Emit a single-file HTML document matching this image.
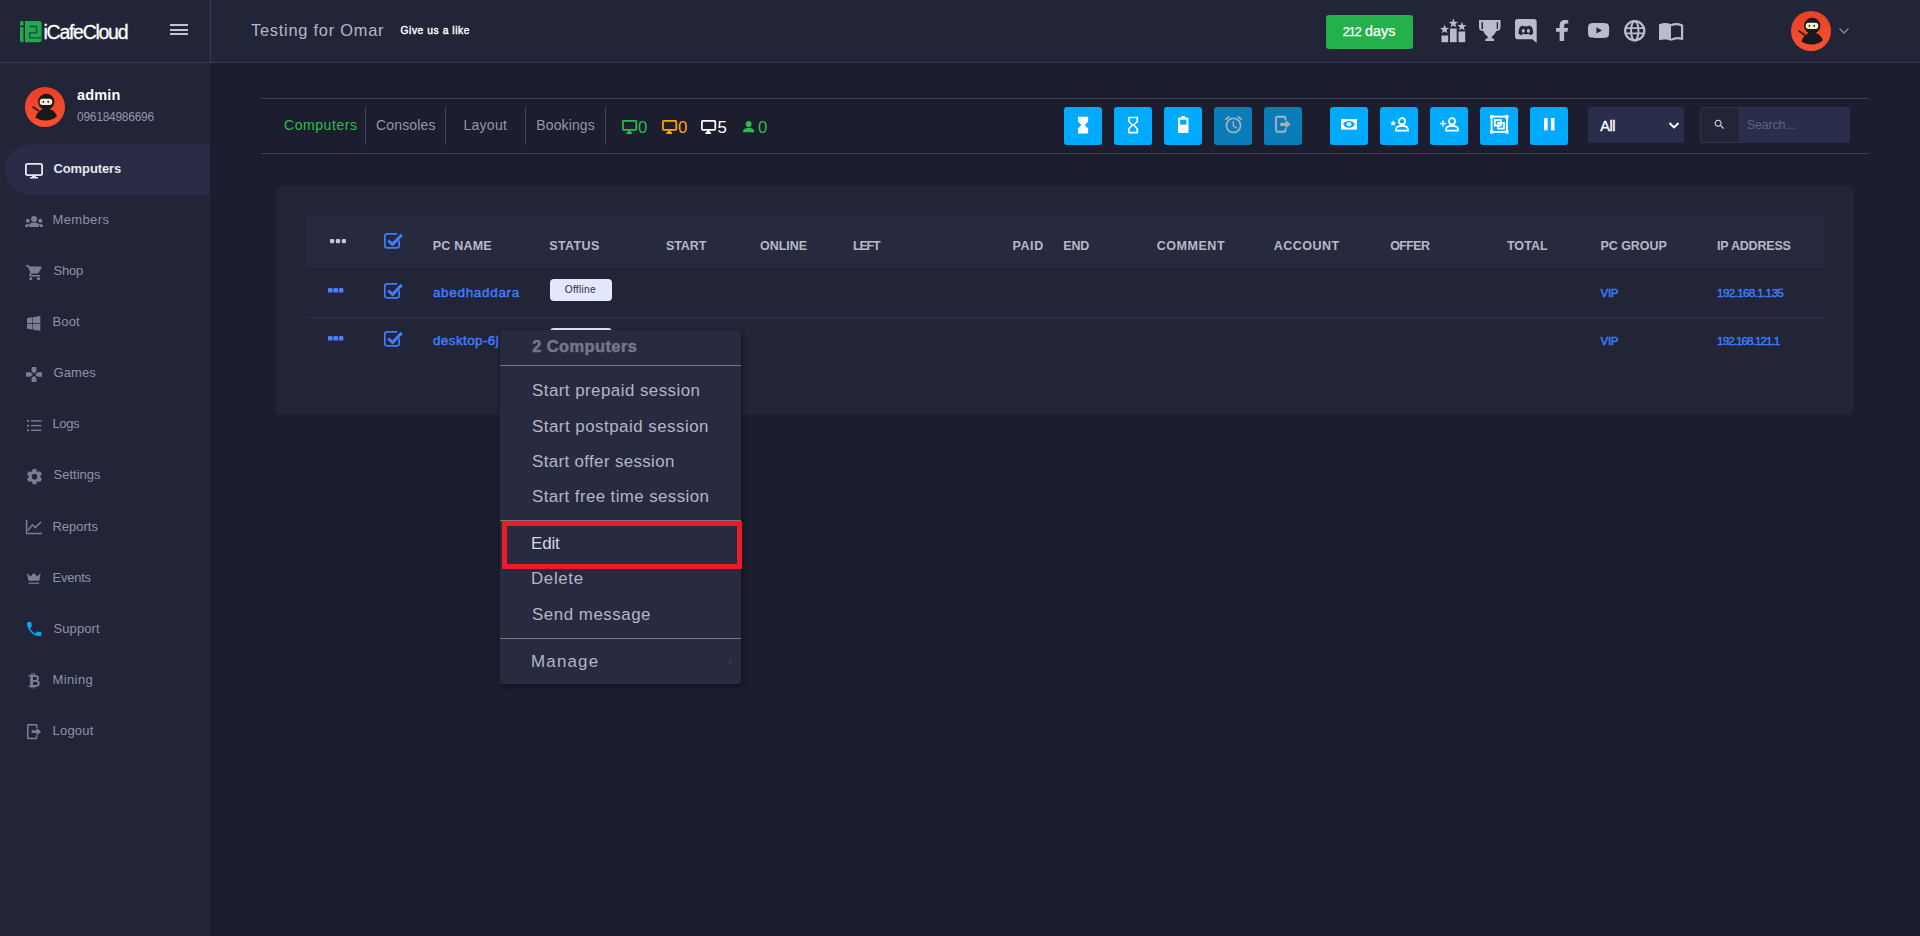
<!DOCTYPE html>
<html lang="en">
<head>
<meta charset="utf-8">
<title>iCafeCloud - Computers</title>
<style>
*{box-sizing:border-box;margin:0;padding:0}
html,body{width:1920px;height:936px;overflow:hidden}
body{background:#1c1d2e;font-family:"Liberation Sans",sans-serif;position:relative;color:#fff}
.abs{position:absolute}
.t{position:absolute;white-space:nowrap;line-height:1;display:block}
svg{position:absolute;display:block;overflow:visible}
#header{left:0;top:0;width:1920px;height:63px;background:#222437;border-bottom:1px solid #363960}
#side{left:0;top:63px;width:210px;height:873px;background:#222437}
#hsep{left:210px;top:0;width:1px;height:62px;background:#363960}
#navact{left:5px;top:144px;width:205px;height:51px;background:#292b47;border-radius:26px 0 0 26px}
.av{border-radius:50%;background:linear-gradient(180deg,#e8402a 0%,#f9512d 100%);overflow:hidden}
#daysbtn{left:1326px;top:15px;width:87px;height:34px;background:#24b04b;border-radius:3px}
#tabbar{left:261px;top:98px;width:1608px;height:56px;border-top:1px solid #414256;border-bottom:1px solid #414256}
.vsep{width:1px;top:107px;height:38px;background:#43455f}
.btn{top:107px;width:38px;height:38px;border-radius:3px;background:#00aaff}
.btn.dis{background:#0a7cb9}
#sel{left:1588px;top:107px;width:96px;height:36px;background:#2b2d4c;border-radius:3px}
#sgrp{left:1700px;top:107px;width:150px;height:36px;border-radius:3px;background:#2b2d4c;overflow:hidden}
#sico{left:0;top:0;width:40px;height:36px;background:#222437;border:1px solid #2e3150;border-radius:3px 0 0 3px}
#card{left:276px;top:186px;width:1578px;height:229px;background:#222437;border-radius:5px}
#thead{left:306px;top:216px;width:1518px;height:52px;background:#27293e}
#rowsep{left:306px;top:317px;width:1518px;height:1px;background:#2f3252}
.badge{left:550px;width:62px;height:22px;background:#e5e7fd;border-radius:4px}
#menu{left:500px;top:330px;width:241px;height:354px;background:#282a3f;border-radius:3px;box-shadow:1px 2px 5px rgba(0,0,0,.45)}
.msep{left:500px;width:241px;height:1px;background:#77767a}
#red{left:502px;top:521px;width:240px;height:48px;border:5px solid #ec1c27}
</style>
</head>
<body>
<div id="header" class="abs"></div>
<div id="side" class="abs"></div>
<div id="hsep" class="abs"></div>
<div id="navact" class="abs"></div>

<!-- logo -->
<svg style="left:20px;top:21.25px" width="21.6" height="21.25" viewBox="0 0 21.6 21.25">
 <rect x="0" y="0" width="3.55" height="4.65" rx="1.2" fill="#23a650"/>
 <path d="M0 5.9H3.55V21.25H1.6C0.7 21.25 0 20.5 0 19.6Z" fill="#23a650"/>
 <path d="M5 0H19.4C20.6 0 21.6 1 21.6 2.2V19C21.6 20.2 20.6 21.25 19.4 21.25H5Z" fill="#23a650"/>
 <path d="M9.6 5.5H16.6V11.9H9.6V16.9H21.6" stroke="#1d4a3a" stroke-width="1.4" fill="none" stroke-linejoin="round"/>
</svg>
<!-- hamburger -->
<div class="abs" style="left:170px;top:24px;width:18px;height:2px;background:#c2c3cb"></div>
<div class="abs" style="left:170px;top:29px;width:18px;height:2px;background:#c2c3cb"></div>
<div class="abs" style="left:170px;top:33px;width:18px;height:2px;background:#c2c3cb"></div>

<div id="daysbtn" class="abs"></div>

<svg style="left:0px;top:0px" width="1920" height="63" viewBox="0 0 1920 63" ><g fill="#b9bccd"><rect x="1441.5" y="35.5" width="6.7" height="6.7"/><rect x="1450" y="28.5" width="6.7" height="13.7"/><rect x="1458.5" y="31.5" width="6.7" height="10.7"/><polygon points="1444.60,24.60 1445.78,27.77 1449.17,27.92 1446.52,30.02 1447.42,33.28 1444.60,31.42 1441.78,33.28 1442.68,30.02 1440.03,27.92 1443.42,27.77"/><polygon points="1453.40,18.50 1454.61,21.74 1458.06,21.89 1455.36,24.04 1456.28,27.36 1453.40,25.46 1450.52,27.36 1451.44,24.04 1448.74,21.89 1452.19,21.74"/><polygon points="1461.90,21.80 1463.08,24.97 1466.47,25.12 1463.82,27.22 1464.72,30.48 1461.90,28.62 1459.08,30.48 1459.98,27.22 1457.33,25.12 1460.72,24.97"/></g></svg>
<svg style="left:1478.75px;top:20px" width="21.56" height="21.06" viewBox="0 0 21.56 21.06" ><g fill="#b9bccd"><path fill-rule="evenodd" d="M0 0H21.56V7.2C21.56 9.5 20 10.9 17.6 10.9H3.96C1.56 10.9 0 9.5 0 7.2ZM2.5 2.3V8.9H4.1V2.3ZM17.46 2.3V8.9H19.06V2.3Z"/><path d="M4.06 0H17.5V8.5C17.5 12.8 14.4 15.5 12.8 16.5V18.4H8.75V16.5C7.2 15.5 4.06 12.8 4.06 8.5Z"/><path d="M6.25 21.06V20.4C6.25 19.2 7.2 18.3 8.4 18.3H13.2C14.4 18.3 15.3 19.2 15.3 20.4V21.06Z"/></g></svg>
<svg style="left:1515px;top:19px" width="21.7" height="24" viewBox="0 0 21.7 24" ><path fill="#b9bccd" d="M2.6 0H19.1C20.5 0 21.7 1.2 21.7 2.6V24L17.2 20.3H2.6C1.2 20.3 0 19.1 0 17.7V2.6C0 1.2 1.2 0 2.6 0Z"/><g transform="translate(0,-0.25) scale(1,1.1)"><path fill="#222437" d="M8.1 6.2C6.9 6.4 5.9 6.8 5.1 7.3C3.9 9.3 3.5 11.4 3.6 13.6C4.6 14.4 5.7 14.9 6.9 15.1L7.6 13.9C7.1 13.7 6.7 13.5 6.3 13.2C8.9 14.5 12.8 14.5 15.4 13.2C15 13.5 14.6 13.7 14.1 13.9L14.8 15.1C16 14.9 17.1 14.4 18.1 13.6C18.3 11.1 17.7 9.1 16.6 7.3C15.8 6.8 14.8 6.4 13.6 6.2L13.2 7C11.6 6.8 10.1 6.8 8.5 7Z"/><ellipse cx="8.3" cy="11" rx="1.5" ry="1.7" fill="#b9bccd"/><ellipse cx="13.4" cy="11" rx="1.5" ry="1.7" fill="#b9bccd"/></g></svg>
<svg style="left:1554.9px;top:19.9px" width="14.3" height="21.1" viewBox="0 0 320 512" preserveAspectRatio="none"><path fill="#b9bccd" d="M279.14 288l14.22-92.66h-88.91v-60.13c0-25.35 12.42-50.06 52.24-50.06h40.42V6.26S260.43 0 225.36 0c-73.22 0-121.08 44.38-121.08 124.72v70.62H22.89V288h81.39v224h100.17V288z"/></svg>
<svg style="left:1587.7px;top:23.3px" width="21.2" height="14.9" viewBox="15 64 546 384" preserveAspectRatio="none"><path fill="#b9bccd" d="M549.655 124.083c-6.281-23.65-24.787-42.276-48.284-48.597C458.781 64 288 64 288 64S117.22 64 74.629 75.486c-23.497 6.322-42.003 24.947-48.284 48.597-11.412 42.867-11.412 132.305-11.412 132.305s0 89.438 11.412 132.305c6.281 23.65 24.787 41.5 48.284 47.821C117.22 448 288 448 288 448s170.78 0 213.371-11.486c23.497-6.321 42.003-24.171 48.284-47.821 11.412-42.867 11.412-132.305 11.412-132.305s0-89.438-11.412-132.305zm-317.51 213.508V175.185l142.739 81.205-142.739 81.201z"/></svg>
<svg style="left:1623.9px;top:19.8px" width="21.5" height="21.5" viewBox="0 0 21.5 21.5" ><g fill="none" stroke="#b9bccd"><circle cx="10.75" cy="10.75" r="9.6" stroke-width="2.3"/><ellipse cx="10.75" cy="10.75" rx="3.7" ry="9.6" stroke-width="2"/><path stroke-width="1.9" d="M2 8.1H19.5M2 13.4H19.5"/></g></svg>
<svg style="left:1658.7px;top:22.7px" width="24.2" height="18.2" viewBox="0 0 24.2 18.2" ><path fill="#b9bccd" d="M0 1.6C3.6 -0.3 8.2 -0.4 12 1.3V18C8.4 16.2 3.7 16.2 0 17.2Z"/><path fill="none" stroke="#b9bccd" stroke-width="2.2" d="M12.1 2.2C15.4 0.7 19.6 0.8 23.1 2.4V15.8C19.7 14.9 15.5 15 12.1 16.9"/></svg>
<svg style="left:1838px;top:26.9px" width="12" height="8" viewBox="0 0 12 8" ><path d="M1.5 1.5L6 6L10.5 1.5" fill="none" stroke="#7f829b" stroke-width="1.5"/></svg>

<!-- avatars -->
<div class="abs av" style="left:25px;top:87px;width:40px;height:40px"></div><svg style="left:25px;top:87px" width="40" height="40" viewBox="0 0 40 40" ><g><path d="M8.1 19.1L14.4 23.5L13.5 24.8L7.2 20.4Z" fill="#191919"/><circle cx="21.2" cy="14.8" r="8.1" fill="#191919"/><path d="M10.4 30.4C12.2 25.2 16 21.6 21 21.6C26 21.6 30.2 24.6 32 29.2C28.6 32.2 24.6 33.4 20.8 33.4C16.8 33.4 13.2 32.4 10.4 30.4Z" fill="#191919"/><rect x="14.7" y="11.7" width="12.6" height="6.4" rx="3" fill="#fdf0d9"/><ellipse cx="18.4" cy="14.8" rx=".85" ry="1.15" fill="#191919"/><ellipse cx="23.2" cy="14.8" rx=".85" ry="1.15" fill="#191919"/></g></svg>
<div class="abs av" style="left:1791px;top:11px;width:40px;height:40px"></div><svg style="left:1791px;top:11px" width="40" height="40" viewBox="0 0 40 40" ><g><path d="M8.1 19.1L14.4 23.5L13.5 24.8L7.2 20.4Z" fill="#191919"/><circle cx="21.2" cy="14.8" r="8.1" fill="#191919"/><path d="M10.4 30.4C12.2 25.2 16 21.6 21 21.6C26 21.6 30.2 24.6 32 29.2C28.6 32.2 24.6 33.4 20.8 33.4C16.8 33.4 13.2 32.4 10.4 30.4Z" fill="#191919"/><rect x="14.7" y="11.7" width="12.6" height="6.4" rx="3" fill="#fdf0d9"/><ellipse cx="18.4" cy="14.8" rx=".85" ry="1.15" fill="#191919"/><ellipse cx="23.2" cy="14.8" rx=".85" ry="1.15" fill="#191919"/></g></svg>

<!-- nav icons -->
<svg style="left:25px;top:162.5px" width="18" height="15.5" viewBox="0 0 18 15.5" ><rect x="0.9" y="0.9" width="16.2" height="11.2" rx="1.6" fill="none" stroke="#e6e7f0" stroke-width="1.8"/><path d="M7.3 12.5H10.7L11 14H13V15.5H5V14H7Z" fill="#e6e7f0"/></svg>
<svg style="left:25px;top:216px" width="18.1" height="11" viewBox="0 0 18.1 11" ><g fill="#7a7e9b"><circle cx="9.05" cy="3" r="3"/><path d="M4.1 11V9.5C4.1 7.4 6.7 6.6 9.05 6.6C11.4 6.6 14 7.4 14 9.5V11Z"/><circle cx="2.8" cy="4.7" r="2.05"/><circle cx="15.3" cy="4.7" r="2.05"/><path d="M0 11V10C0 8.6 1.4 7.9 2.8 7.9C3.5 7.9 4.1 8 4.6 8.3C3.6 8.9 3.1 9.6 3.1 10.5V11Z"/><path d="M18.1 11V10C18.1 8.6 16.7 7.9 15.3 7.9C14.6 7.9 14 8 13.5 8.3C14.5 8.9 15 9.6 15 10.5V11Z"/></g></svg>
<svg style="left:25.6px;top:264.75px" width="15.65" height="15.25" viewBox="1 2 20 20" preserveAspectRatio="none"><path fill="#7a7e9b" d="M7 18c-1.1 0-1.99.9-1.99 2S5.9 22 7 22s2-.9 2-2-.9-2-2-2zM1 2v2h2l3.6 7.59-1.35 2.45c-.16.28-.25.61-.25.96 0 1.1.9 2 2 2h12v-2H7.42c-.14 0-.25-.11-.25-.25l.03-.12.9-1.63h7.45c.75 0 1.41-.41 1.75-1.03l3.58-6.49c.08-.14.12-.31.12-.48 0-.55-.45-1-1-1H5.21l-.94-2H1zm16 16c-1.1 0-1.99.9-1.99 2s.89 2 1.99 2 2-.9 2-2-.9-2-2-2z"/></svg>
<svg style="left:26.9px;top:316.25px" width="13.35" height="14.75" viewBox="0 32 448 448" preserveAspectRatio="none"><path fill="#7a7e9b" d="M0 93.7l183.6-25.3v177.4H0V93.7zm0 324.6l183.6 25.3V268.4H0v149.9zm203.8 28L448 480V268.4H203.8v177.9zm0-380.6v180.1H448V32L203.8 65.7z"/></svg>
<svg style="left:26px;top:366.9px" width="16" height="15" viewBox="2 2 20 20" preserveAspectRatio="none"><path fill="#7a7e9b" d="M15 7.5V2H9v5.5l3 3 3-3zM7.5 9H2v6h5.5l3-3-3-3zM9 16.5V22h6v-5.5l-3-3-3 3zM16.5 9l-3 3 3 3H22V9h-5.5z"/></svg>
<svg style="left:26.9px;top:419.75px" width="14.4" height="11.25" viewBox="0 0 14.4 11.25" ><g fill="#7a7e9b"><rect x="0" y="0" width="2" height="1.8"/><rect x="0" y="4.7" width="2" height="1.8"/><rect x="0" y="9.4" width="2" height="1.8"/><rect x="4" y="0.2" width="10.4" height="1.4"/><rect x="4" y="4.9" width="10.4" height="1.4"/><rect x="4" y="9.6" width="10.4" height="1.4"/></g></svg>
<svg style="left:26.5px;top:468.75px" width="15" height="15.25" viewBox="2.6 2.4 18.8 19.2" preserveAspectRatio="none"><path fill="#7a7e9b" d="M19.14 12.94c.04-.3.06-.61.06-.94 0-.32-.02-.64-.07-.94l2.03-1.58c.18-.14.23-.41.12-.61l-1.92-3.32c-.12-.22-.37-.29-.59-.22l-2.39.96c-.5-.38-1.03-.7-1.62-.94l-.36-2.54c-.04-.24-.24-.41-.48-.41h-3.84c-.24 0-.43.17-.47.41l-.36 2.54c-.59.24-1.13.57-1.62.94l-2.39-.96c-.22-.08-.47 0-.59.22L2.74 8.87c-.12.21-.08.47.12.61l2.03 1.58c-.05.3-.09.63-.09.94s.02.64.07.94l-2.03 1.58c-.18.14-.23.41-.12.61l1.92 3.32c.12.22.37.29.59.22l2.39-.96c.5.38 1.03.7 1.62.94l.36 2.54c.05.24.24.41.48.41h3.84c.24 0 .44-.17.47-.41l.36-2.54c.59-.24 1.13-.56 1.62-.94l2.39.96c.22.08.47 0 .59-.22l1.92-3.32c.12-.22.07-.47-.12-.61l-2.01-1.58zM12 15.6c-1.98 0-3.6-1.62-3.6-3.6s1.62-3.6 3.6-3.6 3.6 1.62 3.6 3.6-1.62 3.6-3.6 3.6z"/></svg>
<svg style="left:26px;top:520px" width="16" height="14" viewBox="0 0 16 14" ><path d="M0.6 0V13.4H16" fill="none" stroke="#7a7e9b" stroke-width="1.5"/><path d="M1.8 10.6L6.4 4.8L9.2 7.6L15 2" fill="none" stroke="#7a7e9b" stroke-width="1.5"/></svg>
<svg style="left:27.25px;top:573px" width="13.75" height="11" viewBox="0 0 13.75 11" ><path fill="#7a7e9b" d="M0 0L3.6 3.6L6.9 0L10.2 3.6L13.75 0L12.3 7.8H1.5Z"/><rect x="1.5" y="9.6" width="10.8" height="1.2" fill="#7a7e9b"/></svg>
<svg style="left:26.9px;top:621.9px" width="14.35" height="14.35" viewBox="3 3 18 18" ><path fill="#00a6ff" d="M6.62 10.79c1.44 2.83 3.76 5.14 6.59 6.59l2.2-2.2c.27-.27.67-.36 1.02-.24 1.12.37 2.33.57 3.57.57.55 0 1 .45 1 1V20c0 .55-.45 1-1 1-9.39 0-17-7.61-17-17 0-.55.45-1 1-1h3.5c.55 0 1 .45 1 1 0 1.25.2 2.45.57 3.57.11.35.03.74-.25 1.02l-2.2 2.2z"/></svg>
<svg style="left:28px;top:672.5px" width="11.75" height="15.5" viewBox="0 0 11.75 15.5" ><g fill="none" stroke="#7a7e9b"><path stroke-width="1.9" d="M3 2.9H6.7C8.8 2.9 10 3.9 10 5.4C10 6.9 8.8 7.9 6.9 7.9H4M4 7.9H7.4C9.5 7.9 10.8 8.9 10.8 10.5C10.8 12.1 9.5 13 7.4 13H3"/><path stroke-width="2.9" d="M3.6 2V13.9"/><path stroke-width="1.3" d="M0.4 2.6H3M0.4 13.3H3"/><path stroke-width="1.2" d="M3.9 0V2.4M6.3 0V2.4M3.9 13.4V15.5M6.3 13.4V15.5"/></g></svg>
<svg style="left:26.9px;top:723.75px" width="14.1" height="15.25" viewBox="0 0 14.1 15.25" ><path fill="none" stroke="#7a7e9b" stroke-width="1.5" d="M9.6 4V1.4C9.6 1 9.3 0.75 9 0.75H1.4C1 0.75 0.75 1 0.75 1.4V13.9C0.75 14.2 1 14.5 1.4 14.5H9C9.3 14.5 9.6 14.2 9.6 13.9V11.2"/><path fill="#7a7e9b" d="M4.6 6.2H9.6V3.9L14.1 7.65L9.6 11.4V9.1H4.6Z"/></svg>

<!-- tab bar -->
<div id="tabbar" class="abs"></div>
<div class="abs vsep" style="left:365px"></div>
<div class="abs vsep" style="left:445px"></div>
<div class="abs vsep" style="left:525px"></div>
<div class="abs vsep" style="left:605px"></div>
<svg style="left:622px;top:120px" width="15.2" height="13.9" viewBox="0 0 15.2 13.9" ><rect x="0.9" y="0.9" width="13.4" height="9" rx="0.8" fill="none" stroke="#2bbd4f" stroke-width="1.75"/><path d="M6 10.6H8.6L8.9 12.3H10.1V13.9H4.4V12.3H5.7Z" fill="#2bbd4f"/></svg>
<svg style="left:661.9px;top:120px" width="15.2" height="13.9" viewBox="0 0 15.2 13.9" ><rect x="0.9" y="0.9" width="13.4" height="9" rx="0.8" fill="none" stroke="#ffa800" stroke-width="1.75"/><path d="M6 10.6H8.6L8.9 12.3H10.1V13.9H4.4V12.3H5.7Z" fill="#ffa800"/></svg>
<svg style="left:701.3px;top:120px" width="15.2" height="13.9" viewBox="0 0 15.2 13.9" ><rect x="0.9" y="0.9" width="13.4" height="9" rx="0.8" fill="none" stroke="#ffffff" stroke-width="1.75"/><path d="M6 10.6H8.6L8.9 12.3H10.1V13.9H4.4V12.3H5.7Z" fill="#ffffff"/></svg>
<svg style="left:743px;top:121.4px" width="11.3" height="11.3" viewBox="0 0 11.2 11.5" ><circle cx="5.6" cy="3" r="3" fill="#2bbd4f"/><path d="M0 11.5V10C0 7.8 3.6 6.8 5.6 6.8C7.6 6.8 11.2 7.8 11.2 10V11.5Z" fill="#2bbd4f"/></svg>
<div class="abs btn" style="left:1064px"></div>
<div class="abs btn" style="left:1114px"></div>
<div class="abs btn" style="left:1164px"></div>
<div class="abs btn dis" style="left:1214px"></div>
<div class="abs btn dis" style="left:1264px"></div>
<div class="abs btn" style="left:1330px"></div>
<div class="abs btn" style="left:1380px"></div>
<div class="abs btn" style="left:1430px"></div>
<div class="abs btn" style="left:1480px"></div>
<div class="abs btn" style="left:1530px"></div>
<svg style="left:1073.1px;top:114.5px" width="20.2" height="20.2" viewBox="0 0 24 24" ><path fill="#ffffff" d="M6 2v6h.01L6 8.01 10 12l-4 4 .01.01H6V22h12v-5.99h-.01L18 16l-4-4 4-3.99-.01-.01H18V2H6z"/></svg>
<svg style="left:1123.1px;top:114.5px" width="20.2" height="20.2" viewBox="0 0 24 24" ><path fill="#ffffff" d="M6 2v6h.01L6 8.01 10 12l-4 4 .01.01H6V22h12v-5.99h-.01L18 16l-4-4 4-3.99-.01-.01H18V2H6zm10 14.5V20H8v-3.5l4-4 4 4zm-4-5l-4-4V4h8v3.5l-4 4z"/></svg>
<svg style="left:1177.9px;top:116.2px" width="10.5" height="17.1" viewBox="0 0 10 17" preserveAspectRatio="none"><path fill="#fff" d="M3.3 0H6.7V1.6H8.6C9.4 1.6 10 2.2 10 3V15.6C10 16.4 9.4 17 8.6 17H1.4C0.6 17 0 16.4 0 15.6V3C0 2.2 0.6 1.6 1.4 1.6H3.3Z"/><rect x="2" y="3.6" width="6" height="5" fill="#00aaff"/></svg>
<svg style="left:1222.7px;top:114.1px" width="21" height="21" viewBox="0 0 24 24" ><path fill="#aab0b8" d="M22 5.72l-4.6-3.86-1.29 1.53 4.6 3.86L22 5.72zM7.88 3.39L6.6 1.86 2 5.71l1.29 1.53 4.59-3.85zM12.5 8H11v6l4.75 2.85.75-1.23-4-2.37V8zM12 4c-4.97 0-9 4.03-9 9s4.02 9 9 9c4.97 0 9-4.03 9-9s-4.03-9-9-9zm0 16c-3.87 0-7-3.13-7-7s3.13-7 7-7 7 3.13 7 7-3.13 7-7 7z"/></svg>
<svg style="left:1275px;top:116.4px" width="15.9" height="16.6" viewBox="0 0 15.4 16.6" ><path fill="none" stroke="#aab0b8" stroke-width="1.9" d="M10.2 4.2V2.1C10.2 1.4 9.7 0.8 9 0.8H2.1C1.4 0.8 0.8 1.4 0.8 2.1V14.5C0.8 15.2 1.4 15.8 2.1 15.8H9C9.7 15.8 10.2 15.2 10.2 14.5V12.3"/><path fill="#aab0b8" d="M5 6.7H10.4V4.2L15.4 8.3L10.4 12.4V9.9H5Z"/></svg>
<svg style="left:1341px;top:119.3px" width="16" height="10.6" viewBox="0 0 16 10.6" ><rect x="0" y="0" width="16" height="10.6" fill="#fff"/><ellipse cx="8" cy="5.3" rx="5.6" ry="3.4" fill="#00aaff"/><ellipse cx="8" cy="5.3" rx="2.4" ry="2" fill="#fff"/></svg>
<svg style="left:1389.5px;top:117.1px" width="19" height="14.5" viewBox="0 0 19 14.5" ><polygon fill="#fff" points="3.10,3.10 3.91,5.28 6.24,5.38 4.42,6.83 5.04,9.07 3.10,7.79 1.16,9.07 1.78,6.83 -0.04,5.38 2.29,5.28"/><circle cx="12" cy="4.2" r="3.1" fill="none" stroke="#fff" stroke-width="1.7"/><path d="M6 13.6V12.4C6 10 9 8.9 12 8.9C15 8.9 18 10 18 12.4V13.6Z" fill="none" stroke="#fff" stroke-width="1.7"/></svg>
<svg style="left:1439.5px;top:117.1px" width="19" height="14.5" viewBox="0 0 19 14.5" ><path d="M0 6.6H6M3 3.6V9.6" stroke="#fff" stroke-width="1.5" fill="none"/><circle cx="12" cy="4.2" r="3.1" fill="none" stroke="#fff" stroke-width="1.7"/><path d="M6 13.6V12.4C6 10 9 8.9 12 8.9C15 8.9 18 10 18 12.4V13.6Z" fill="none" stroke="#fff" stroke-width="1.7"/></svg>
<svg style="left:1489.7px;top:115.3px" width="18.5" height="18.5" viewBox="0 0 18.5 18.5" ><g fill="none" stroke="#fff" stroke-width="1.8"><rect x="1.6" y="1.6" width="15.3" height="15.3"/><rect x="4.8" y="5" width="6" height="5.6"/><rect x="8" y="8" width="6" height="5.6"/></g><g fill="#fff"><rect x="0" y="0" width="3.4" height="3.4"/><rect x="15.1" y="0" width="3.4" height="3.4"/><rect x="0" y="15.1" width="3.4" height="3.4"/><rect x="15.1" y="15.1" width="3.4" height="3.4"/></g></svg>
<svg style="left:1544px;top:118.3px" width="10.5" height="12.4" viewBox="0 0 10.5 12.4" ><rect x="0" y="0" width="3.6" height="12.4" fill="#fff"/><rect x="6.9" y="0" width="3.6" height="12.4" fill="#fff"/></svg>
<div id="sel" class="abs"></div>
<svg style="left:1668px;top:120.5px" width="12" height="9" viewBox="0 0 12 9"><path d="M1.5 2L6 6.5L10.5 2" stroke="#fff" stroke-width="1.9" fill="none"/></svg>
<div id="sgrp" class="abs"><div id="sico" class="abs"></div></div>
<svg style="left:1713px;top:118px" width="13" height="13" viewBox="0 0 24 24"><path fill="#d9dbe6" d="M15.5 14h-.79l-.28-.27C15.41 12.59 16 11.11 16 9.5 16 5.91 13.09 3 9.5 3S3 5.91 3 9.5 5.91 16 9.5 16c1.61 0 3.09-.59 4.23-1.57l.27.28v.79l5 4.99L20.49 19l-4.99-5zm-6 0C7.01 14 5 11.99 5 9.5S7.01 5 9.5 5 14 7.01 14 9.5 11.99 14 9.5 14z"/></svg>

<!-- card + table -->
<div id="card" class="abs"></div>
<div id="thead" class="abs"></div>
<div id="rowsep" class="abs"></div>
<div class="abs" style="left:306px;top:268px;width:1518px;height:1px;background:#1e1f32"></div>
<div class="abs badge" style="top:279px"></div>
<div class="abs badge" style="top:328px"></div>
<svg style="left:329.9px;top:239px" width="16" height="4.2" viewBox="0 0 16 4.2" ><rect x="0" y="0" width="4.2" height="4.2" rx="1.2" fill="#c6c7d0"/><rect x="5.9" y="0" width="4.2" height="4.2" rx="1.2" fill="#c6c7d0"/><rect x="11.8" y="0" width="4.2" height="4.2" rx="1.2" fill="#c6c7d0"/></svg>
<svg style="left:327.6px;top:288.2px" width="15.4" height="4.6" viewBox="0 0 15.4 4.6" ><rect x="0" y="0" width="4.6" height="4.6" rx="1.2" fill="#4a82fb"/><rect x="5.4" y="0" width="4.6" height="4.6" rx="1.2" fill="#4a82fb"/><rect x="10.8" y="0" width="4.6" height="4.6" rx="1.2" fill="#4a82fb"/></svg>
<svg style="left:327.6px;top:336.2px" width="15.4" height="4.6" viewBox="0 0 15.4 4.6" ><rect x="0" y="0" width="4.6" height="4.6" rx="1.2" fill="#4a82fb"/><rect x="5.4" y="0" width="4.6" height="4.6" rx="1.2" fill="#4a82fb"/><rect x="10.8" y="0" width="4.6" height="4.6" rx="1.2" fill="#4a82fb"/></svg>
<svg style="left:384.1px;top:233.2px" width="19.3" height="16" viewBox="0 0 19.3 16" ><path d="M15.15 7.6V12.4C15.15 13.8 14.1 14.85 12.7 14.85H3.3C1.9 14.85 0.85 13.8 0.85 12.4V3.3C0.85 1.9 1.9 0.85 3.3 0.85H13.2" fill="none" stroke="#3f7efc" stroke-width="1.7"/><path d="M4.2 7.6L8.6 11.4L17.8 1.9" fill="none" stroke="#3f7efc" stroke-width="3"/></svg>
<svg style="left:384.1px;top:283.2px" width="19.3" height="16" viewBox="0 0 19.3 16" ><path d="M15.15 7.6V12.4C15.15 13.8 14.1 14.85 12.7 14.85H3.3C1.9 14.85 0.85 13.8 0.85 12.4V3.3C0.85 1.9 1.9 0.85 3.3 0.85H13.2" fill="none" stroke="#3f7efc" stroke-width="1.7"/><path d="M4.2 7.6L8.6 11.4L17.8 1.9" fill="none" stroke="#3f7efc" stroke-width="3"/></svg>
<svg style="left:384.1px;top:331.2px" width="19.3" height="16" viewBox="0 0 19.3 16" ><path d="M15.15 7.6V12.4C15.15 13.8 14.1 14.85 12.7 14.85H3.3C1.9 14.85 0.85 13.8 0.85 12.4V3.3C0.85 1.9 1.9 0.85 3.3 0.85H13.2" fill="none" stroke="#3f7efc" stroke-width="1.7"/><path d="M4.2 7.6L8.6 11.4L17.8 1.9" fill="none" stroke="#3f7efc" stroke-width="3"/></svg>

<span class="t" id="logo" style="left:43.55px;top:22.62px;font-size:19.5px;font-weight:400;color:#ffffff;letter-spacing:-1.281px;-webkit-text-stroke:.3px #fff;">iCafeCloud</span>
<span class="t" id="title" style="left:251.00px;top:22.01px;font-size:16.4px;font-weight:400;color:#b4b7c9;letter-spacing:0.754px;">Testing for Omar</span>
<span class="t" id="like" style="left:400.50px;top:25.81px;font-size:10.2px;font-weight:400;color:#ffffff;letter-spacing:0.601px;-webkit-text-stroke:.4px #fff;">Give us a like</span>
<span class="t" id="days1" style="left:1342.83px;top:26.11px;font-size:12.7px;font-weight:400;color:#ffffff;letter-spacing:-1.081px;-webkit-text-stroke:.25px #fff;">212</span>
<span class="t" id="days2" style="left:1364.92px;top:24.10px;font-size:14.3px;font-weight:400;color:#ffffff;letter-spacing:0.133px;-webkit-text-stroke:.25px #fff;">days</span>
<span class="t" id="admin" style="left:77.00px;top:88.01px;font-size:14.5px;font-weight:700;color:#ffffff;letter-spacing:0.164px;">admin</span>
<span class="t" id="phone" style="left:77.00px;top:111.01px;font-size:12px;font-weight:400;color:#9396ad;letter-spacing:-0.265px;">096184986696</span>
<span class="t" id="n0" style="left:53.50px;top:162.00px;font-size:13px;font-weight:700;color:#e6e7f0;letter-spacing:-0.111px;">Computers</span>
<span class="t" id="n1" style="left:52.50px;top:213.00px;font-size:13px;font-weight:400;color:#8f92ac;letter-spacing:0.370px;">Members</span>
<span class="t" id="n2" style="left:53.50px;top:264.00px;font-size:13px;font-weight:400;color:#8f92ac;letter-spacing:-0.210px;">Shop</span>
<span class="t" id="n3" style="left:52.50px;top:315.00px;font-size:13px;font-weight:400;color:#8f92ac;letter-spacing:0.123px;">Boot</span>
<span class="t" id="n4" style="left:53.50px;top:366.00px;font-size:13px;font-weight:400;color:#8f92ac;letter-spacing:0.087px;">Games</span>
<span class="t" id="n5" style="left:52.50px;top:417.00px;font-size:13px;font-weight:400;color:#8f92ac;letter-spacing:-0.397px;">Logs</span>
<span class="t" id="n6" style="left:53.50px;top:468.00px;font-size:13px;font-weight:400;color:#8f92ac;letter-spacing:0.004px;">Settings</span>
<span class="t" id="n7" style="left:52.50px;top:520.00px;font-size:13px;font-weight:400;color:#8f92ac;letter-spacing:-0.020px;">Reports</span>
<span class="t" id="n8" style="left:52.50px;top:571.00px;font-size:13px;font-weight:400;color:#8f92ac;letter-spacing:-0.249px;">Events</span>
<span class="t" id="n9" style="left:53.50px;top:622.00px;font-size:13px;font-weight:400;color:#8f92ac;letter-spacing:0.097px;">Support</span>
<span class="t" id="n10" style="left:52.50px;top:673.00px;font-size:13px;font-weight:400;color:#8f92ac;letter-spacing:0.387px;">Mining</span>
<span class="t" id="n11" style="left:52.50px;top:724.00px;font-size:13px;font-weight:400;color:#8f92ac;letter-spacing:0.220px;">Logout</span>
<span class="t" id="t0" style="left:284.00px;top:118.21px;font-size:14px;font-weight:400;color:#2bbd4f;letter-spacing:0.566px;">Computers</span>
<span class="t" id="t1" style="left:376.00px;top:118.21px;font-size:14px;font-weight:400;color:#9697a8;letter-spacing:0.162px;">Consoles</span>
<span class="t" id="t2" style="left:463.40px;top:118.21px;font-size:14px;font-weight:400;color:#9697a8;letter-spacing:0.291px;">Layout</span>
<span class="t" id="t3" style="left:536.30px;top:118.21px;font-size:14px;font-weight:400;color:#9697a8;letter-spacing:0.115px;">Bookings</span>
<span class="t" id="c0" style="left:638.10px;top:120.01px;font-size:16.8px;font-weight:400;color:#2bbd4f;letter-spacing:0.000px;">0</span>
<span class="t" id="c1" style="left:678.10px;top:120.01px;font-size:16.8px;font-weight:400;color:#ffa800;letter-spacing:0.000px;">0</span>
<span class="t" id="c2" style="left:717.60px;top:120.01px;font-size:16.8px;font-weight:400;color:#ffffff;letter-spacing:0.000px;">5</span>
<span class="t" id="c3" style="left:758.10px;top:120.01px;font-size:16.8px;font-weight:400;color:#2bbd4f;letter-spacing:0.000px;">0</span>
<span class="t" id="all" style="left:1600.17px;top:118.81px;font-size:14.5px;font-weight:400;color:#ffffff;letter-spacing:-0.371px;-webkit-text-stroke:.35px #fff;">All</span>
<span class="t" id="search" style="left:1746.80px;top:119.41px;font-size:12.5px;font-weight:400;color:#5f627c;letter-spacing:-0.206px;">Search...</span>
<span class="t" id="h0" style="left:432.70px;top:240.21px;font-size:12.5px;font-weight:700;color:#b7b9c8;letter-spacing:0.216px;">PC NAME</span>
<span class="t" id="h1" style="left:549.30px;top:240.21px;font-size:12.5px;font-weight:700;color:#b7b9c8;letter-spacing:0.379px;">STATUS</span>
<span class="t" id="h2" style="left:666.00px;top:240.21px;font-size:12.5px;font-weight:700;color:#b7b9c8;letter-spacing:-0.100px;">START</span>
<span class="t" id="h3" style="left:760.00px;top:240.21px;font-size:12.5px;font-weight:700;color:#b7b9c8;letter-spacing:-0.037px;">ONLINE</span>
<span class="t" id="h4" style="left:853.00px;top:240.21px;font-size:12.5px;font-weight:700;color:#b7b9c8;letter-spacing:-1.203px;">LEFT</span>
<span class="t" id="h5" style="left:1012.40px;top:240.21px;font-size:12.5px;font-weight:700;color:#b7b9c8;letter-spacing:0.630px;">PAID</span>
<span class="t" id="h6" style="left:1063.30px;top:240.21px;font-size:12.5px;font-weight:700;color:#b7b9c8;letter-spacing:-0.232px;">END</span>
<span class="t" id="h7" style="left:1156.80px;top:240.21px;font-size:12.5px;font-weight:700;color:#b7b9c8;letter-spacing:0.527px;">COMMENT</span>
<span class="t" id="h8" style="left:1273.80px;top:240.21px;font-size:12.5px;font-weight:700;color:#b7b9c8;letter-spacing:0.457px;">ACCOUNT</span>
<span class="t" id="h9" style="left:1390.30px;top:240.21px;font-size:12.5px;font-weight:700;color:#b7b9c8;letter-spacing:-0.658px;">OFFER</span>
<span class="t" id="h10" style="left:1506.90px;top:240.21px;font-size:12.5px;font-weight:700;color:#b7b9c8;letter-spacing:0.058px;">TOTAL</span>
<span class="t" id="h11" style="left:1600.40px;top:240.21px;font-size:12.5px;font-weight:700;color:#b7b9c8;letter-spacing:-0.034px;">PC GROUP</span>
<span class="t" id="h12" style="left:1716.90px;top:240.21px;font-size:12.5px;font-weight:700;color:#b7b9c8;letter-spacing:-0.185px;">IP ADDRESS</span>
<span class="t" id="r1n" style="left:432.93px;top:286.01px;font-size:13.5px;font-weight:400;color:#3f7efc;letter-spacing:0.678px;-webkit-text-stroke:.45px #3f7efc;">abedhaddara</span>
<span class="t" id="r1s" style="left:564.70px;top:285.20px;font-size:10.2px;font-weight:400;color:#2b2d44;letter-spacing:0.284px;">Offline</span>
<span class="t" id="r1g" style="left:1600.62px;top:288.00px;font-size:11.5px;font-weight:400;color:#3f7efc;letter-spacing:-0.358px;-webkit-text-stroke:.45px #3f7efc;">VIP</span>
<span class="t" id="r1i" style="left:1717.10px;top:287.00px;font-size:11.7px;font-weight:400;color:#3f7efc;letter-spacing:-0.678px;-webkit-text-stroke:.4px #3f7efc;">192.168.1.135</span>
<span class="t" id="r2n" style="left:432.93px;top:334.01px;font-size:13.5px;font-weight:400;color:#3f7efc;letter-spacing:0.396px;-webkit-text-stroke:.45px #3f7efc;">desktop-6j</span>
<span class="t" id="r2s" style="left:564.70px;top:334.20px;font-size:10.2px;font-weight:400;color:#2b2d44;letter-spacing:0.284px;">Offline</span>
<span class="t" id="r2g" style="left:1600.62px;top:336.00px;font-size:11.5px;font-weight:400;color:#3f7efc;letter-spacing:-0.358px;-webkit-text-stroke:.45px #3f7efc;">VIP</span>
<span class="t" id="r2i" style="left:1717.10px;top:335.00px;font-size:11.7px;font-weight:400;color:#3f7efc;letter-spacing:-0.962px;-webkit-text-stroke:.4px #3f7efc;">192.168.121.1</span>

<!-- context menu -->
<div id="menu" class="abs"></div>
<div class="abs msep" style="top:365px"></div>
<div class="abs msep" style="top:520px"></div>
<div class="abs msep" style="top:638px"></div>
<svg style="left:728.8px;top:658.4px" width="4" height="7.4" viewBox="0 0 4 7.4"><path d="M0 0L4 3.7L0 7.4Z" fill="#37373c"/></svg>
<span class="t" id="m0" style="left:532.25px;top:338.10px;font-size:16.4px;font-weight:700;color:#74778c;letter-spacing:0.443px;-webkit-text-stroke:.5px #74778c;">2 Computers</span>
<span class="t" id="m1" style="left:532.00px;top:382.92px;font-size:16.9px;font-weight:400;color:#b3b6c8;letter-spacing:0.466px;">Start prepaid session</span>
<span class="t" id="m2" style="left:532.00px;top:418.61px;font-size:16.9px;font-weight:400;color:#b3b6c8;letter-spacing:0.491px;">Start postpaid session</span>
<span class="t" id="m3" style="left:532.00px;top:454.01px;font-size:16.9px;font-weight:400;color:#b3b6c8;letter-spacing:0.365px;">Start offer session</span>
<span class="t" id="m4" style="left:532.00px;top:488.92px;font-size:16.9px;font-weight:400;color:#b3b6c8;letter-spacing:0.403px;">Start free time session</span>
<span class="t" id="m5" style="left:531.00px;top:535.61px;font-size:16.9px;font-weight:400;color:#d5d7e3;letter-spacing:-0.137px;">Edit</span>
<span class="t" id="m6" style="left:531.00px;top:570.92px;font-size:16.9px;font-weight:400;color:#b3b6c8;letter-spacing:0.654px;">Delete</span>
<span class="t" id="m7" style="left:532.00px;top:607.01px;font-size:16.9px;font-weight:400;color:#b3b6c8;letter-spacing:0.529px;">Send message</span>
<span class="t" id="m8" style="left:531.00px;top:654.11px;font-size:16.9px;font-weight:400;color:#b3b6c8;letter-spacing:1.211px;">Manage</span>
<div id="red" class="abs"></div>
</body>
</html>
